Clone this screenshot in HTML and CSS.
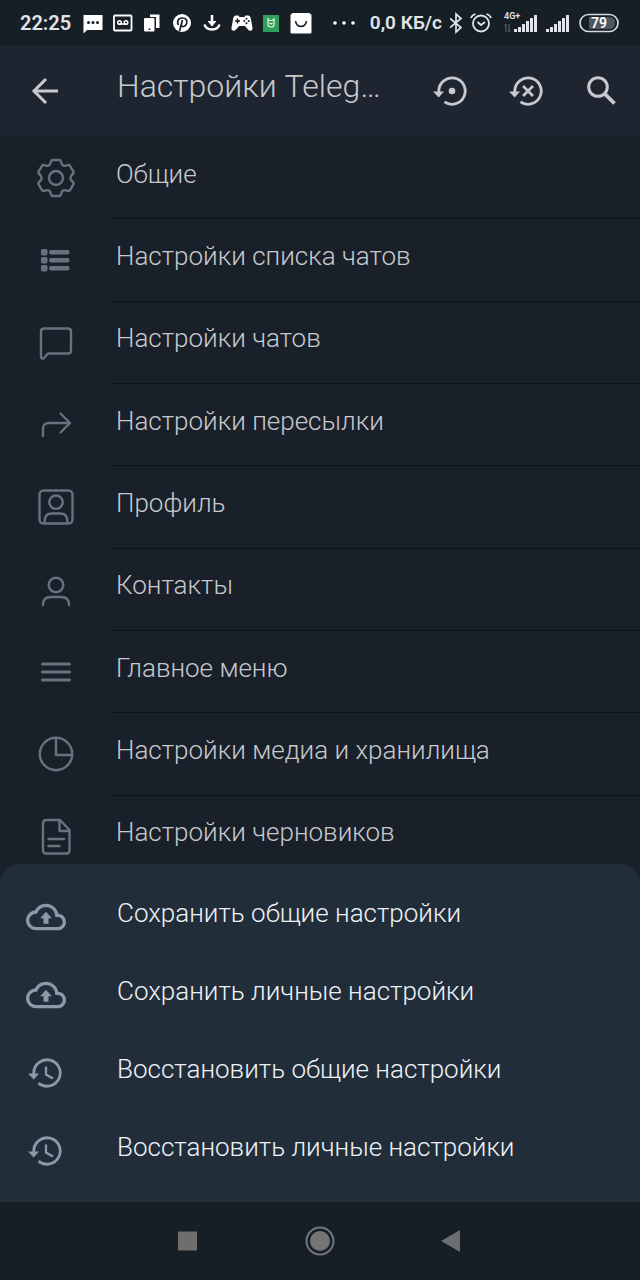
FILE: index.html
```
<!DOCTYPE html>
<html lang="ru">
  <head>
    <meta charset="UTF-8" />
    <meta name="viewport" content="width=device-width, initial-scale=1.0" />
    <title>Настройки Telegraph</title>
    <link rel="stylesheet" href="styles.css" />
  </head>
  <body>
    <div class="status-bar">
      <span class="clock">22:25</span>
      <div class="notifications">
        <svg width="22" height="24" viewBox="0 0 22 24">
          <path d="M1.500 4h19v15H5l-3.500 3.500z" fill="#fff" />
          <g fill="#171e27"><circle cx="6.500" cy="11.500" r="1.500" /><circle cx="11" cy="11.500" r="1.500" /><circle cx="15.500" cy="11.500" r="1.500" /></g>
        </svg>
        <svg width="22" height="24" viewBox="0 0 22 24" fill="none" stroke="#fff">
          <rect x="2" y="4.500" width="17.500" height="15" rx="1" stroke-width="1.800" />
          <path d="M7.500 13h6.500" stroke-width="1.500" />
          <circle cx="7.500" cy="11.500" r="1.800" stroke-width="1.500" />
          <circle cx="14" cy="11.500" r="1.800" stroke-width="1.500" />
        </svg>
        <svg width="22" height="24" viewBox="0 0 22 24" fill="#fff">
          <path d="M9 3.500h9.500v13.500H15V6H9z" />
          <path fill-rule="evenodd" d="M4 7h8.500q1 0 1 1v11.500q0 1-1 1H4q-1 0-1-1V8q0-1 1-1zM7.500 17.500v1.500h1.800v-1.500z" />
        </svg>
        <svg width="22" height="24" viewBox="0 0 22 24">
          <circle cx="11" cy="12" r="9" fill="#fff" />
          <path d="M11.500 9L8.500 20M7.500 14C5.500 11 7 7 11.200 7s5.300 3 4.400 5.500c-1 3.500-4.300 3.700-5.300 2" fill="none" stroke="#171e27" stroke-width="1.700" />
        </svg>
        <svg width="22" height="24" viewBox="0 0 22 24" fill="none" stroke="#fff" stroke-width="2.500">
          <path d="M11 4v8M3.500 13.500q1.500 5 7.500 5t7.500-5" />
          <path d="M6.500 10h9L11 15.500z" fill="#fff" stroke="none" />
        </svg>
        <svg width="22" height="24" viewBox="0 0 22 24">
          <path d="M5 4.500h2.500l1 1.500h5l1-1.500H17q2 0 2.600 2l1.900 10q.3 3.500-2.500 3.300Q17.500 19.500 14 15H8q-3.500 4.500-5 4.800Q.2 20 .5 16.500l1.900-10q.6-2 2.600-2z" fill="#fff" />
          <path d="M6.500 7.500v5M4 10h5" stroke="#171e27" stroke-width="1.500" />
          <g fill="#171e27"><circle cx="15.500" cy="7.800" r="1" /><circle cx="15.500" cy="12.200" r="1" /><circle cx="13.300" cy="10" r="1" /><circle cx="17.700" cy="10" r="1" /></g>
        </svg>
        <svg width="22" height="24" viewBox="0 0 22 24">
          <rect x="3" y="4" width="16" height="17" fill="#2f9e5b" />
          <path d="M8 8l1.500 1.500h3L14 8v5.500q0 2.500-3 2.500t-3-2.500zM9.500 12l1.500 1 1.500-1" fill="none" stroke="#e3f5e9" stroke-width="1.200" />
        </svg>
        <svg width="22" height="24" viewBox="0 0 22 24">
          <path d="M2.500 2h17l2 2v17.500q0 1-1 1h-19q-1 0-1-1V4z" fill="#fff" />
          <path d="M5.500 10q1 5.500 5.500 5.500t5.500-5.500" fill="none" stroke="#171e27" stroke-width="1.500" />
        </svg>
      </div>
      <svg class="more" width="24" height="24" viewBox="0 0 24 24" fill="#fff">
        <circle cx="3" cy="12" r="1.800" /><circle cx="12" cy="12" r="1.800" /><circle cx="21" cy="12" r="1.800" />
      </svg>
      <div class="system">
        <span class="speed">0,0 КБ/с</span>
        <svg width="12" height="24" viewBox="0 0 12 24" fill="none" stroke="#e1e4e8" stroke-width="1.700">
          <path d="M0 7.500l11 9L6 21V3l5 4.500-11 9" />
        </svg>
        <svg width="26" height="24" viewBox="0 0 26 24" fill="none" stroke="#e1e4e8" stroke-width="1.800">
          <circle cx="11" cy="12.500" r="8" />
          <path d="M1 7q1-3 4.500-4M21 7q-1-3-4.500-4M7.500 11l3.500 3 4-3" />
        </svg>
        <svg width="34" height="24" viewBox="0 0 34 24" fill="#e1e4e8">
          <text class="network" x="0" y="8">4G+</text>
          <path d="M2 21v-8l-1.500 2M5 13v8l1.500-2" fill="none" stroke="#5d656f" />
          <path d="M10 18h3v3h-3zM14 16h3v5h-3zM18 13h3v8h-3zM22 10h3v11h-3zM26 7h3v14h-3zM30 4h3v17h-3z" />
        </svg>
        <svg width="24" height="24" viewBox="0 0 24 24" fill="#e1e4e8">
          <path d="M0 18h3v3H0zM4 16h3v5H4zM8 13h3v8H8zM12 10h3v11h-3zM16 7h3v14h-3zM20 4h3v17h-3z" />
        </svg>
        <svg width="42" height="24" viewBox="0 0 42 24">
          <rect x="2" y="3.500" width="38" height="17" rx="8.500" fill="none" stroke="#d5d8dc" stroke-width="1.700" />
          <path d="M11 6h20q6 0 6 6t-6 6H11z" fill="#50565e" />
          <text class="battery" x="21" y="17" text-anchor="middle">79</text>
        </svg>
      </div>
    </div>

    <header class="toolbar">
      <button type="button" aria-label="Назад">
        <svg width="36" height="36" viewBox="-18 -18 36 36" fill="none" stroke="currentColor" stroke-width="3">
          <path d="M13 0h-24M1-12L-11 0 1 12" />
        </svg>
      </button>
      <h1>Настройки Teleg…</h1>
      <div class="actions">
        <button type="button" aria-label="Восстановить настройки">
          <svg width="36" height="36" viewBox="-20 -18 36 36" fill="none" stroke="currentColor" stroke-width="2.800">
            <path d="M-13.200 2V0A13.200 13.200 0 1 1-7.500 10.900" />
            <path d="M-19 .5h11L-13.300 6.500z" fill="currentColor" stroke="none" />
            <circle r="3.300" fill="currentColor" stroke="none" />
          </svg>
        </button>
        <button type="button" aria-label="Сбросить настройки">
          <svg width="36" height="36" viewBox="-20 -18 36 36" fill="none" stroke="currentColor" stroke-width="2.800">
            <path d="M-13.200 2V0A13.200 13.200 0 1 1-7.500 10.900M-5-5L5 5M5-5L-5 5" />
            <path d="M-19 .5h11L-13.300 6.500z" fill="currentColor" stroke="none" />
          </svg>
        </button>
        <button type="button" aria-label="Поиск">
          <svg width="36" height="36" viewBox="0 0 36 36" fill="none" stroke="currentColor" stroke-width="3">
            <circle cx="14" cy="14" r="9.300" />
            <path d="M20.500 20.500l10 10" stroke-width="3.800" />
          </svg>
        </button>
      </div>
    </header>

    <main class="settings">
      <a href="#general">
        <svg viewBox="-20 -20 40 40">
          <path d="M-3.500-18H3.500Q4.800-18 5-16.500 5.500-13.500 7.200-12.500 8.700-11.600 11.500-12.800 13.300-13.400 14-12.200L17.400-6.300Q18.200-5 16.800-4 14.400-2 14.400 0 14.400 2 16.800 4 18.200 5 17.400 6.300L14 12.200Q13.300 13.400 11.500 12.800 8.700 11.600 7.200 12.500 5.500 13.500 5 16.500 4.800 18 3.500 18H-3.500Q-4.800 18-5 16.500-5.500 13.500-7.200 12.500-8.700 11.600-11.500 12.800-13.300 13.400-14 12.200L-17.400 6.300Q-18.200 5-16.800 4-14.400 2-14.400 0-14.400-2-16.800-4-18.200-5-17.400-6.300L-14-12.200Q-13.300-13.400-11.500-12.800-8.700-11.600-7.200-12.500-5.500-13.500-5-16.500-4.800-18-3.500-18z" />
          <circle r="7" />
        </svg>
        <span>Общие</span>
      </a>
      <a href="#chat-list">
        <svg viewBox="-20 -20 40 40">
          <g fill="currentColor" stroke="none">
            <rect x="-15" y="-11" width="6.500" height="6.500" rx="1.500" />
            <rect x="-15" y="-3" width="6.500" height="6.500" rx="1.500" />
            <rect x="-15" y="5" width="6.500" height="6.500" rx="1.500" />
            <rect x="-7" y="-10" width="20.500" height="4.500" rx="2" />
            <rect x="-7" y="-2" width="20.500" height="4.500" rx="2" />
            <rect x="-7" y="6" width="20.500" height="4.500" rx="2" />
          </g>
        </svg>
        <span>Настройки списка чатов</span>
      </a>
      <a href="#chats">
        <svg viewBox="-20 -20 40 40">
          <path d="M-15-11.500Q-15-14.500-12-14.500H12Q15-14.500 15-11.500V7.500Q15 10.500 12 10.500H-8L-12 15Q-15 17-15 13z" />
        </svg>
        <span>Настройки чатов</span>
      </a>
      <a href="#forwarding">
        <svg viewBox="-20 -20 40 40">
          <path d="M-13 11V4Q-13-2-7-2H13M4.500-11.500L14-2 4.500 7.500" />
        </svg>
        <span>Настройки пересылки</span>
      </a>
      <a href="#profile">
        <svg viewBox="-20 -20 40 40">
          <rect x="-16.500" y="-16.500" width="33" height="33" rx="4" />
          <circle cy="-4.800" r="6.700" />
          <path d="M-11.500 16Q-11.500 6.500-5 6.500H5Q11.500 6.500 11.500 16" />
        </svg>
        <span>Профиль</span>
      </a>
      <a href="#contacts">
        <svg viewBox="-20 -20 40 40">
          <circle cy="-5" r="7.300" />
          <path d="M-13 15Q-13 7-5 7H5Q13 7 13 15" />
        </svg>
        <span>Контакты</span>
      </a>
      <a href="#main-menu">
        <svg viewBox="-20 -20 40 40">
          <path d="M-13.500-8H13.500M-13.500 0H13.500M-13.500 8H13.500" stroke-width="3" />
        </svg>
        <span>Главное меню</span>
      </a>
      <a href="#media">
        <svg viewBox="-20 -20 40 40">
          <circle r="16.200" />
          <path d="M0-16V1H16" />
        </svg>
        <span>Настройки медиа и хранилища</span>
      </a>
      <a href="#drafts">
        <svg viewBox="-20 -20 40 40">
          <path d="M-13-13Q-13-17-10-17H4L13.500-7V13Q13.500 16.500 10.500 16.500H-10Q-13 16.500-13 13zM3.500-16.500V-6H13M-7.500 2H8M-7.500 9H3.500" />
        </svg>
        <span>Настройки черновиков</span>
      </a>
    </main>

    <!-- shared shapes of the bottom sheet icons -->
    <svg class="defs" aria-hidden="true">
      <symbol id="cloud" viewBox="0 0 24 24">
        <path fill="currentColor" d="M19.350 10.040C18.670 6.590 15.640 4 12 4 9.110 4 6.600 5.640 5.350 8.040 2.340 8.360 0 10.910 0 14c0 3.310 2.690 6 6 6h13c2.760 0 5-2.240 5-5 0-2.640-2.050-4.780-4.650-4.960zM19 18H6c-2.210 0-4-1.790-4-4s1.790-4 4-4h.710C7.370 7.690 9.480 6 12 6c3.040 0 5.500 2.460 5.500 5.500v.5H19c1.660 0 3 1.340 3 3s-1.340 3-3 3zM12 8.800L8.500 12.800h2V16h3v-3.200h2z" />
      </symbol>
      <symbol id="history" viewBox="-21 -20 40 40">
        <g fill="none" stroke="currentColor" stroke-width="2.800">
          <path d="M-13.200 2V0A13.200 13.200 0 1 1-8.500 10.100" />
          <path d="M-1-6.500V1.500L6 5.500" stroke-width="2.300" />
          <path d="M-19 .5h11L-13.300 6.500z" fill="currentColor" stroke="none" />
        </g>
      </symbol>
    </svg>

    <div class="sheet">
      <button type="button"><svg><use href="#cloud" /></svg><span>Сохранить общие настройки</span></button>
      <button type="button"><svg><use href="#cloud" /></svg><span>Сохранить личные настройки</span></button>
      <button type="button"><svg><use href="#history" /></svg><span>Восстановить общие настройки</span></button>
      <button type="button"><svg><use href="#history" /></svg><span>Восстановить личные настройки</span></button>
    </div>

    <nav class="nav-bar">
      <button type="button" aria-label="Недавние">
        <svg width="32" height="32" viewBox="-16 -16 32 32"><path d="M-10-9.500h19v19h-19z" fill="#6e6e6e" /></svg>
      </button>
      <button type="button" aria-label="Домой">
        <svg width="32" height="32" viewBox="-16 -16 32 32">
          <circle r="13.500" fill="none" stroke="#737579" stroke-width="2" />
          <circle r="10" fill="#757575" />
        </svg>
      </button>
      <button type="button" aria-label="Назад">
        <svg width="32" height="32" viewBox="-16 -16 32 32"><path d="M8-11v22L-11 0z" fill="#6e6e6e" /></svg>
      </button>
    </nav>
  </body>
</html>
```
FILE: styles.css
```
:root {
  --bar-color: #161e26;
  --toolbar-color: #1e2530;
  --bg-color: #1a2029;
  --divider: #0f151d;
  --sheet-color: #222d3a;
  --text-color: #c6c9cd;
  --icon-color: #69717d;
}

* {
  box-sizing: border-box;
}

body {
  display: flex;
  flex-direction: column;
  min-height: 100vh;
  margin: 0;
  background-color: var(--bg-color);
  color: var(--text-color);
  font-family: Roboto, "Noto Sans", sans-serif;
  font-weight: 300;
}

svg {
  display: block;
  flex: none;
}

button {
  padding: 0;
  border: none;
  background: none;
  color: inherit;
  font: inherit;
  cursor: pointer;
}

.defs {
  display: none;
}

/* status bar */
.status-bar {
  display: flex;
  align-items: center;
  height: 45px;
  padding: 0 20px;
  background-color: var(--bar-color);
  color: #e1e4e8;
  font-size: 20px;
  font-weight: 600;
  white-space: nowrap;
}

.clock {
  width: 62px;
}

.notifications {
  display: flex;
  justify-content: space-between;
  width: 230px;
}

.more {
  margin-left: 20px;
}

.system {
  display: flex;
  align-items: center;
  gap: 8px;
  margin-left: auto;
}

.speed {
  font-size: 19px;
}

.network {
  font-size: 9px;
  font-weight: 600;
}

.battery {
  fill: #fff;
  font-size: 14px;
  font-weight: 600;
}

/* toolbar */
.toolbar {
  display: flex;
  align-items: center;
  height: 92px;
  padding: 0 20px 0 27px;
  background-color: var(--toolbar-color);
  border-bottom: 1px solid #181e27;
}

.toolbar h1 {
  flex: 1;
  margin: 0;
  padding: 0 0 10px 54px;
  font-size: 32px;
  font-weight: 300;
  line-height: 40px;
  white-space: nowrap;
}

.actions {
  display: flex;
  gap: 40px;
}

/* settings list */
.settings {
  display: grid;
  flex: 1;
  grid-auto-rows: 1fr;
}

.settings a {
  display: flex;
  align-items: center;
  gap: 35px;
  padding-left: 36px;
  color: inherit;
  text-decoration: none;
}

.settings svg {
  width: 40px;
  height: 40px;
  fill: none;
  stroke: currentColor;
  stroke-width: 2.4px;
  stroke-linecap: round;
  stroke-linejoin: round;
  color: var(--icon-color);
}

.settings span {
  display: flex;
  flex: 1;
  align-items: center;
  align-self: stretch;
  padding: 0 5px 8px;
  border-bottom: 1px solid var(--divider);
  font-size: 26px;
  line-height: 32px;
}

/* bottom sheet, its rounded top lies over the last row */
.sheet {
  position: relative;
  display: flex;
  flex-direction: column;
  margin-top: -14px;
  padding: 14px 0 12px;
  border-radius: 20px 20px 0 0;
  background-color: var(--sheet-color);
}

.sheet button {
  display: flex;
  align-items: center;
  gap: 51px;
  height: 78px;
  padding-left: 26px;
  color: #eef2f6;
  font-size: 26px;
  line-height: 32px;
}

.sheet svg {
  width: 40px;
  height: 40px;
  color: #8b99a9;
}

.sheet span {
  padding-bottom: 8px;
}

/* navigation bar */
.nav-bar {
  display: flex;
  align-items: center;
  justify-content: center;
  gap: 100px;
  height: 78px;
  background-color: var(--bar-color);
}
```
